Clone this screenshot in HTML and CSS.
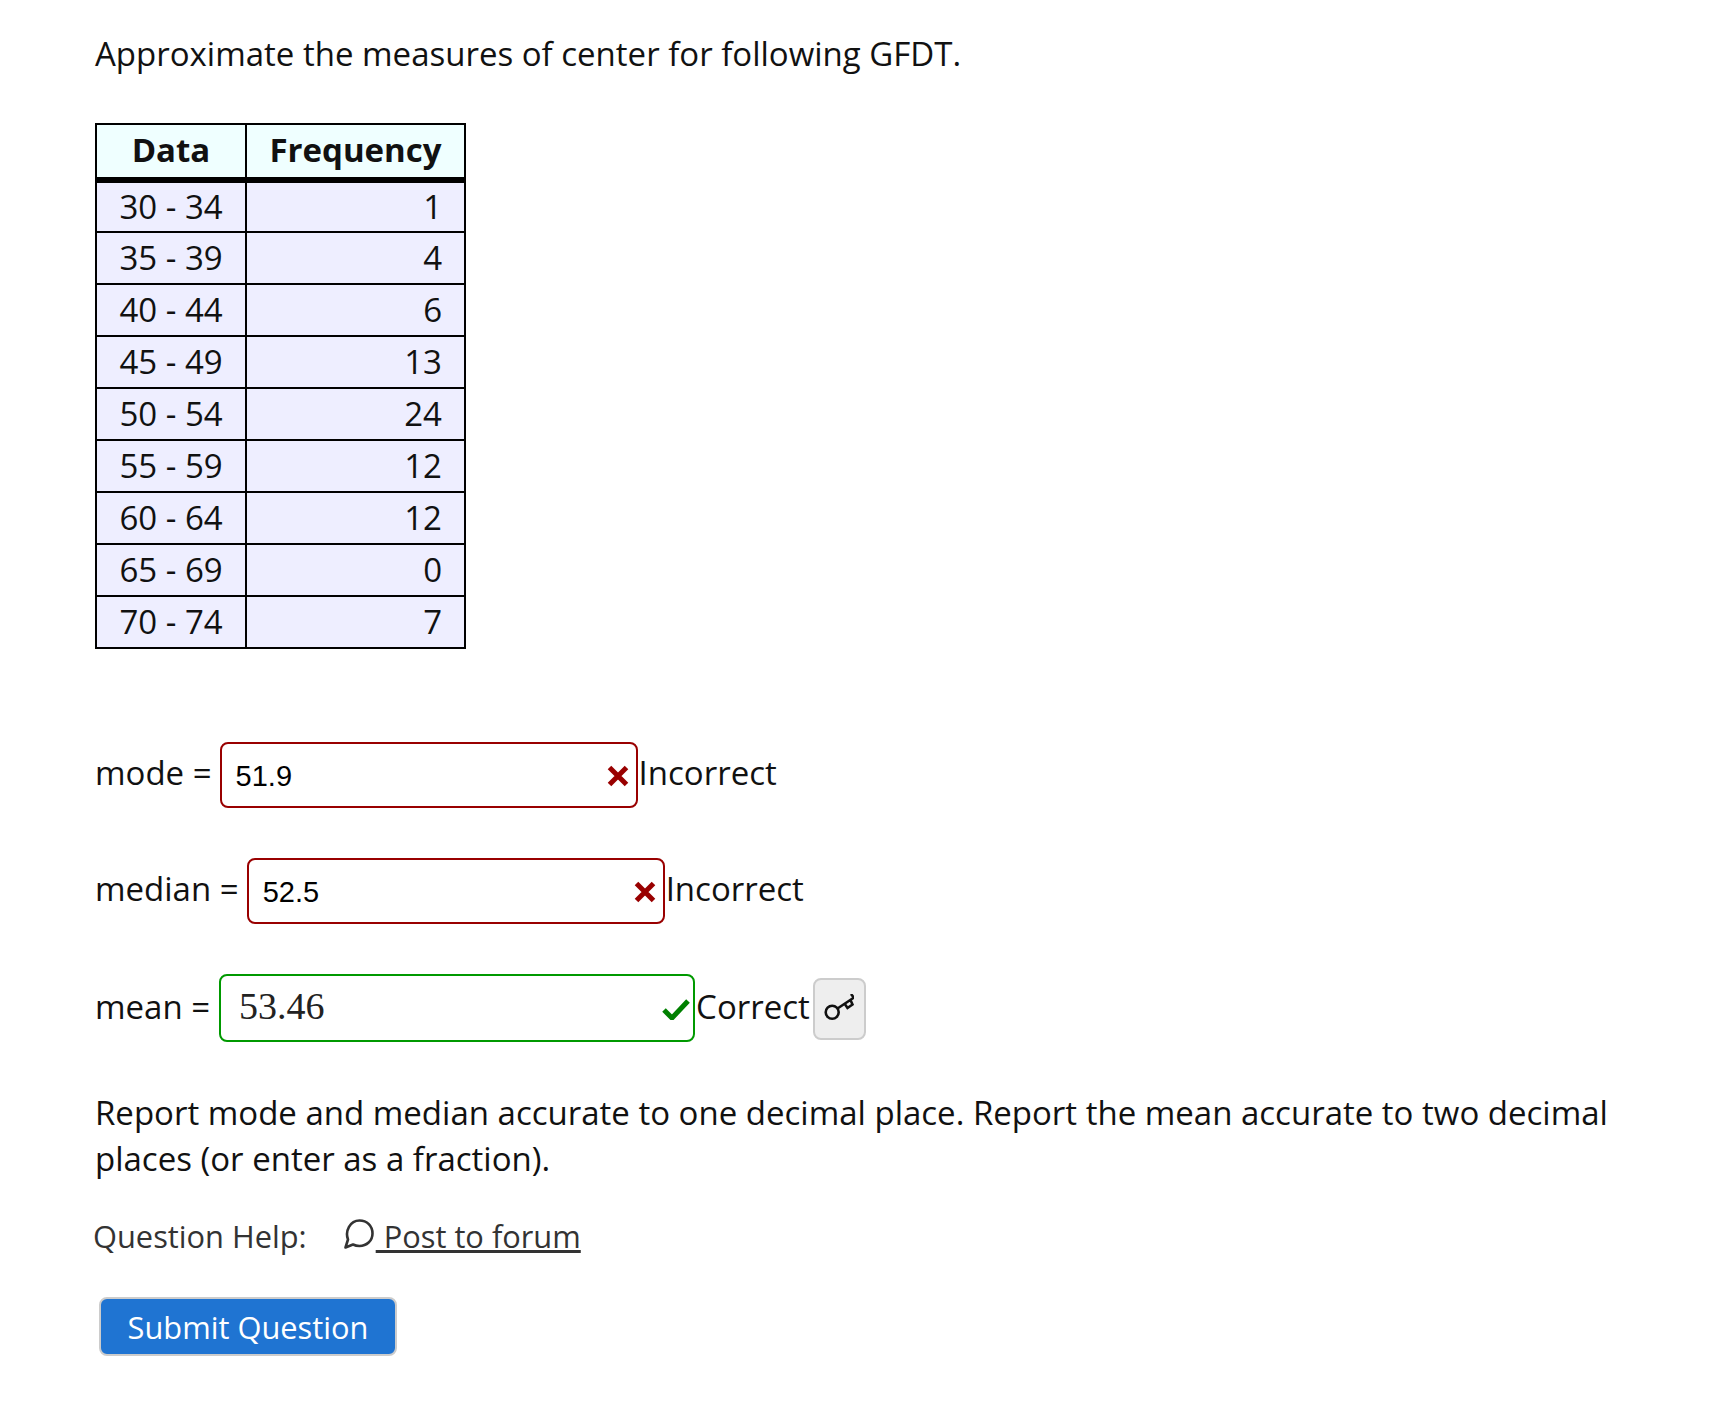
FILE: index.html
```html
<!DOCTYPE html>
<html lang="en">
<head>
<meta charset="utf-8">
<title>Question</title>
<link rel="stylesheet" href="styles.css">
</head>
<body>
<main class="page">
  <p class="intro">Approximate the measures of center for following GFDT.</p>
  <table class="gfdt">
    <thead>
      <tr><th>Data</th><th>Frequency</th></tr>
    </thead>
    <tbody>
      <tr><td class="range">30 - 34</td><td class="freq">1</td></tr>
      <tr><td class="range">35 - 39</td><td class="freq">4</td></tr>
      <tr><td class="range">40 - 44</td><td class="freq">6</td></tr>
      <tr><td class="range">45 - 49</td><td class="freq">13</td></tr>
      <tr><td class="range">50 - 54</td><td class="freq">24</td></tr>
      <tr><td class="range">55 - 59</td><td class="freq">12</td></tr>
      <tr><td class="range">60 - 64</td><td class="freq">12</td></tr>
      <tr><td class="range">65 - 69</td><td class="freq">0</td></tr>
      <tr><td class="range">70 - 74</td><td class="freq">7</td></tr>
    </tbody>
  </table>

  <div class="answer answer-mode">
    <span class="label">mode =</span>
    <span class="box wrong"><span class="value">51.9</span>
      <svg class="mark" viewBox="0 0 22 22"><path d="M2.500 2.500 19.500 19.500M19.500 2.500 2.500 19.500" fill="none" stroke="#990000" stroke-width="5"/></svg>
    </span>
    <span class="status">Incorrect</span>
  </div>
  <div class="answer answer-median">
    <span class="label">median =</span>
    <span class="box wrong"><span class="value">52.5</span>
      <svg class="mark" viewBox="0 0 22 22"><path d="M2.500 2.500 19.500 19.500M19.500 2.500 2.500 19.500" fill="none" stroke="#990000" stroke-width="5"/></svg>
    </span>
    <span class="status">Incorrect</span>
  </div>
  <div class="answer answer-mean">
    <span class="label label-mean">mean =</span>
    <span class="box right"><span class="math">53.46</span>
      <svg class="mark check" viewBox="0 0 28 22"><path d="M2 12 10 20 26 3" fill="none" stroke="#008000" stroke-width="5"/></svg>
    </span>
    <span class="status status-mean">Correct</span>
    <button class="key" type="button" aria-label="Show answer">
      <svg viewBox="0 0 30 30" width="30" height="30"><g fill="none" stroke="#111" stroke-width="2.600"><circle cx="8.200" cy="18.300" r="6.500"/><path d="M13.500 14.500 30 3.500M20.500 9.500 23.500 14 28.500 10.500 26.500 6M27 0 30.500 4.500"/></g></svg>
    </button>
  </div>

  <p class="note">Report mode and median accurate to one decimal place. Report the mean accurate to two decimal places (or enter as a fraction).</p>

  <div class="help">
    <span class="help-label">Question Help:</span>
    <a class="forum" href="#">
      <svg class="bubble" viewBox="0 0 30 30" width="30" height="30"><path d="M1.500 28.500 4 20.500C0.800 12 6 1.500 15.500 1.500 23 1.500 28.500 7 28.500 14.500 28.500 22 22.500 27 15.500 27 13 27 11 26.500 9 25.500Z" fill="none" stroke="#333" stroke-width="2.600" stroke-linejoin="round"/></svg><span class="forum-text"> Post to forum</span>
    </a>
  </div>

  <button class="submit" type="button">Submit Question</button>
</main>
</body>
</html>
```
FILE: styles.css
```css
* { box-sizing: border-box; }
html, body { margin: 0; background: #fff; }
body {
  font-family: "Open Sans", sans-serif;
  font-size: 33px;
  color: #111;
}
.page { padding: 31px 95px 0; min-height: 1410px; }
.intro { margin: 0 0 46px; line-height: 46px; }
.gfdt {
  border-collapse: collapse;
  border: 2px solid #000;
  width: 371px;
  table-layout: fixed;
  margin-bottom: 93px;
}
.gfdt th, .gfdt td { border: 2px solid #000; padding: 0 22px 1px; height: 52px; line-height: 44px; }
.gfdt th:first-child { width: 150px; }
.gfdt th { background: #efffff; font-weight: 700; height: 56px; padding-bottom: 3px; border-bottom: 6px solid #000; text-align: center; }
.gfdt td { background: #eeeeff; }
.range { text-align: center; }
.freq { text-align: right; }
.answer { display: flex; align-items: center; }
.answer-mode { margin-bottom: 50px; }
.answer-median { margin-bottom: 50px; }
.label { margin-right: 8px; white-space: nowrap; position: relative; top: -3px; }
.label-mean { top: -2px; margin-right: 9px; }
.box {
  display: flex;
  align-items: center;
  justify-content: space-between;
  width: 418px;
  height: 66px;
  border: 2px solid;
  border-radius: 8px;
  background: #fff;
  padding: 0 7px 0 14px;
}
.wrong { border-color: #990000; }
.right { border-color: #009900; width: 476px; height: 68px; padding: 0 3px 0 18px; }
.value { font-family: "Liberation Sans", sans-serif; font-size: 29px; color: #000; margin-top: 2px; }
.math { font-family: "Liberation Serif", serif; font-size: 38px; color: #222; margin-top: -4px; }
.mark { width: 22px; height: 22px; flex: none; margin-top: 2px; }
.check { width: 28px; height: 22px; }
.status { margin-left: 1px; position: relative; top: -3px; }
.status-mean { top: -2px; }
.key {
  display: flex;
  align-items: center;
  justify-content: center;
  width: 53px;
  height: 62px;
  margin: 2px 0 0 3px;
  padding: 0;
  background: #eeeeee;
  border: 2px solid #cccccc;
  border-radius: 8px;
}
.note { margin: 48px 0 0; line-height: 46px; }
.help { display: flex; align-items: center; margin: 33px 0 0 -2px; color: #333; font-size: 30.8px; }
.help-label { margin-right: 37px; }
.forum { display: flex; align-items: center; color: #333; text-decoration: none; }
.bubble { flex: none; margin-top: -4px; }
.forum-text { margin-left: 2px; text-decoration: underline; text-decoration-thickness: 2.500px; white-space: pre; }
.submit {
  display: block;
  margin: 40px 0 0 4px;
  width: 298px;
  height: 59px;
  padding: 0;
  background: #1f74d2;
  color: #fff;
  border: 2px solid #cccccc;
  border-radius: 8px;
  font: 30.8px "Open Sans", sans-serif;
}
```
